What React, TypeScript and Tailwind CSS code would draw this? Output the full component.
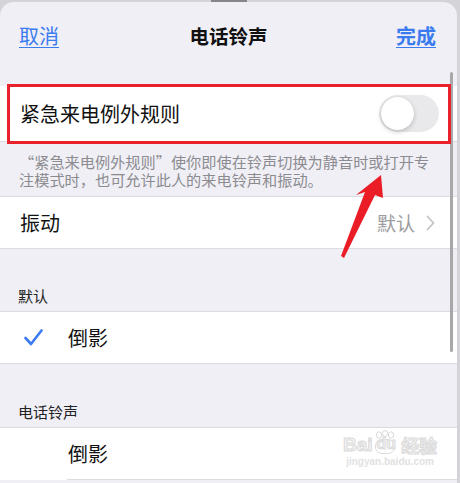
import React from 'react';

const font = "font-['Noto_Sans_CJK_SC','Noto_Sans',sans-serif]";

const Chevron = () => (
  <svg width="9" height="16" viewBox="0 0 9 16" className="ml-[11px]">
    <polyline points="1.5,1.5 7.5,8 1.5,14.5" fill="none" stroke="#c4c4c7" strokeWidth="1.8" strokeLinecap="round" strokeLinejoin="round" />
  </svg>
);

const Check = () => (
  <svg width="19" height="17" viewBox="0 0 19 17">
    <polyline points="1.5,9 7,15 17.5,1.5" fill="none" stroke="#3b7cf2" strokeWidth="2.6" strokeLinecap="round" strokeLinejoin="round" />
  </svg>
);

const App: React.FC = () => {
  return (
    <div className={`relative w-[460px] h-[483px] overflow-hidden bg-[#d3d3d8] ${font}`}>
      {/* grabber */}
      <div className="absolute left-[211px] top-0 w-[36px] h-[2px] bg-[#86868b]" />

      {/* sheet */}
      <div className="mt-[2px] mr-[3px] h-[481px] rounded-t-[14px] bg-[#f0eff5] overflow-hidden">
        {/* nav */}
        <div className="relative flex items-center justify-between h-[68px] px-[19px]">
          <span className="text-[20px] leading-none text-[#3a7bef] underline underline-offset-[3px] decoration-1">取消</span>
          <span className="absolute left-1/2 -translate-x-1/2 text-[19.5px] leading-none font-bold text-[#111]">电话铃声</span>
          <span className="mr-[2px] text-[20px] leading-none font-semibold text-[#3a7bef] underline underline-offset-[3px] decoration-1">完成</span>
        </div>

        <div className="h-[16px]" />

        {/* emergency bypass row */}
        <div className="flex items-center justify-between h-[56px] bg-white border-b border-[#dcdce0] pl-[20px] pr-[18px]">
          <span className="text-[20px] leading-none text-[#111]">紧急来电例外规则</span>
          <div className="w-[60px] h-[37px] rounded-full bg-[#e9e9eb] p-[2px] flex">
            <div className="w-[33px] h-[33px] rounded-full bg-white shadow-[0_2px_5px_rgba(0,0,0,0.18),0_0_1px_rgba(0,0,0,0.15)]" />
          </div>
        </div>

        {/* footnote */}
        <div className="pt-[10px] pb-[8px] pl-[19px] pr-[6px] text-[15.2px] text-[#8b8b90] whitespace-nowrap">
          <p className="h-[18px] leading-[18px]">“紧急来电例外规则”使你即使在铃声切换为静音时或打开专</p>
          <p className="h-[18px] leading-[18px]">注模式时，也可允许此人的来电铃声和振动。</p>
        </div>

        {/* vibration row */}
        <div className="flex items-center justify-between h-[53px] bg-white border-y border-[#dcdce0] pl-[20px] pr-[22px]">
          <span className="text-[20px] leading-none text-[#111]">振动</span>
          <div className="flex items-center">
            <span className="text-[19px] leading-none text-[#9c9ca0]">默认</span>
            <Chevron />
          </div>
        </div>

        {/* default section */}
        <div className="h-[62px] flex items-end pl-[18px] pb-[8px]">
          <span className="text-[15px] leading-none text-[#222]">默认</span>
        </div>
        <div className="flex items-center h-[53px] bg-white border-y border-[#dcdce0] pl-[24px]">
          <Check />
          <span className="ml-[25px] text-[20px] leading-none text-[#111]">倒影</span>
        </div>

        {/* ringtones section */}
        <div className="h-[63px] flex items-end pl-[18px] pb-[8px]">
          <span className="text-[15px] leading-none text-[#222]">电话铃声</span>
        </div>
        <div className="bg-white border-t border-[#dcdce0]">
          <div className="relative flex items-center h-[52px] ml-[67px] border-b border-[#dcdce0]">
            <span className="ml-[1px] text-[20px] leading-none text-[#111]">倒影</span>
            {/* watermark */}
            <div className="absolute left-[276px] top-[2px] flex flex-col items-center text-[#f3f3f3]">
              <div className="flex items-end gap-[1px] leading-none font-bold [-webkit-text-stroke:1px_#dadada]">
                <span className="text-[19px] font-['Liberation_Sans',sans-serif]">Bai</span>
                <svg width="22" height="24" viewBox="0 0 22 24">
                  <g fill="none" stroke="#dadada" strokeWidth="1">
                    <ellipse cx="5" cy="5" rx="2.6" ry="3.2" />
                    <ellipse cx="11" cy="3.5" rx="2.6" ry="3" />
                    <ellipse cx="17" cy="5" rx="2.6" ry="3.2" />
                    <rect x="1.5" y="9.5" width="19" height="14" rx="6.5" />
                  </g>
                </svg>
                <span className="text-[16px] -ml-[20px] mr-[4px] mb-[2px] font-['Liberation_Sans',sans-serif]">du</span>
                <span className="text-[18px]">经验</span>
              </div>
              <span className="mt-[3px] text-[10px] leading-none font-bold text-[#e2e2e2] font-['Liberation_Sans',sans-serif]">jingyan.baidu.com</span>
            </div>
          </div>
        </div>
      </div>

      {/* scroll indicator */}
      <div className="absolute left-[450px] top-[72px] w-[3px] h-[280px] rounded-full bg-[#a8a8ab]" />

      {/* red annotation box */}
      <div className="absolute left-[7px] top-[84px] w-[444px] h-[60px] border-[3px] border-[#e8212b]" />

      {/* red arrow */}
      <svg className="absolute left-0 top-0" width="460" height="483" viewBox="0 0 460 483">
        <polygon points="381,175 383,198 375,195 344,258 341,256 365,192 356,195" fill="#ea1c26" />
      </svg>
    </div>
  );
};

export default App;
